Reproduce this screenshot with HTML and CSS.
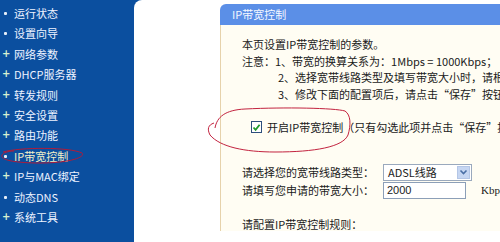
FILE: index.html
```html
<!DOCTYPE html>
<html lang="zh">
<head>
<meta charset="utf-8">
<link rel="stylesheet" href="styles.css">
</head>
<body>
<div class="page">
  <nav class="side">
    <ul class="menu">
      <li class="dot">运行状态</li>
      <li class="dot">设置向导</li>
      <li class="plus">网络参数</li>
      <li class="plus">DHCP服务器</li>
      <li class="plus">转发规则</li>
      <li class="plus">安全设置</li>
      <li class="plus">路由功能</li>
      <li class="dot active">IP带宽控制</li>
      <li class="plus">IP与MAC绑定</li>
      <li class="dot">动态DNS</li>
      <li class="plus">系统工具</li>
    </ul>
    <svg class="mark mark-side" width="86" height="20" viewBox="0 0 86 20"><path d="M3 6 C20 1, 70 1, 82 7 C86 11, 70 17, 40 17 C15 17, 0 14, 2 9 C3 7, 8 5, 14 5" fill="none" stroke="#b01c3a" stroke-width="1"/></svg>
  </nav>
  <main class="main">
    <section class="panel">
      <div class="panel-head">IP带宽控制</div>
      <div class="panel-body">
        <p class="line">本页设置IP带宽控制的参数。</p>
        <p class="line">注意：1、带宽的换算关系为：1Mbps = 1000Kbps；</p>
        <p class="line indent">2、选择宽带线路类型及填写带宽大小时，请根据实际情况进行选择和填写</p>
        <p class="line indent">3、修改下面的配置项后，请点击“保存”按钮，使配置项生效</p>
        <div class="check-row">
          <span class="checkbox"><svg width="9" height="9" viewBox="0 0 9 9"><path d="M1.5 4.5 L3.6 6.8 L7.6 1.8" fill="none" stroke="#1f9a2a" stroke-width="1.8"/></svg></span>
          <span>开启IP带宽控制（只有勾选此项并点击“保存”按钮后，设置才能生效）</span>
        </div>
        <div class="field-row first">
          <span class="label">请选择您的宽带线路类型：</span>
          <span class="select"><span class="select-text">ADSL线路</span><span class="select-btn"><svg width="9" height="7" viewBox="0 0 9 7"><path d="M1.5 1.5 L4.5 4.5 L7.5 1.5" fill="none" stroke="#4a6fa5" stroke-width="1.6"/></svg></span></span>
        </div>
        <div class="field-row">
          <span class="label">请填写您申请的带宽大小：</span>
          <span class="input">2000</span>
          <span class="unit">Kbps</span>
        </div>
        <p class="line rules">请配置IP带宽控制规则：</p>
      </div>
    </section>
    <svg class="mark mark-main" width="150" height="48" viewBox="0 0 150 48"><path d="M10 21 C12 10, 20 3, 40 2 C80 0, 130 1, 140 4 C146 8, 146 18, 143 28 C138 40, 110 45, 70 45 C40 45, 15 40, 5 28 C2 22, 3 18, 9 16" fill="none" stroke="#c2233f" stroke-width="1"/></svg>
  </main>
</div>
</body>
</html>
```
FILE: styles.css
```css
html, body {
  margin: 0;
  padding: 0;
}
body {
  width: 500px;
  height: 242px;
  overflow: hidden;
  background: #0b4f9f;
  font-family: "SimSun", "Noto Sans CJK SC", sans-serif;
}
.page {
  display: flex;
  height: 242px;
}
.side {
  position: relative;
  width: 134px;
  flex: none;
  background: #0b4f9f;
}
.menu {
  list-style: none;
  margin: 0;
  padding: 4px 0 0 0;
}
.menu li {
  position: relative;
  height: 20.4px;
  line-height: 18px;
  padding-left: 14px;
  font-size: 11px;
  color: #eef3ff;
  white-space: nowrap;
}
.menu li.dot::before {
  content: "";
  position: absolute;
  left: 4px;
  top: 8px;
  width: 3px;
  height: 3px;
  background: #e6eef8;
  border-radius: 1px;
}
.menu li.plus::before {
  content: "+";
  position: absolute;
  left: 2px;
  top: 0;
  font-family: "DejaVu Sans", sans-serif;
  font-weight: bold;
  font-size: 10px;
  color: #d8f0d0;
}
.menu li.active {
  color: #f2f0c8;
}
.mark {
  position: absolute;
  pointer-events: none;
}
.mark-side {
  left: 0;
  top: 146px;
}
.main {
  position: relative;
  flex: 1;
  background: #ffffff;
  border-top-left-radius: 8px;
  padding: 4px 0 0 86px;
  overflow: hidden;
}
.panel {
  width: 300px;
}
.panel-head {
  height: 21px;
  line-height: 20px;
  background: #5b8fe7;
  border-radius: 6px 0 0 0;
  color: #f4f8ff;
  font-size: 11px;
  padding-left: 12px;
}
.panel-body {
  background: #fffdf3;
  border-left: 1px solid #e6d2ab;
  padding: 11px 0 8px 21px;
  height: 206px;
  box-sizing: border-box;
  color: #1a1a1a;
  font-size: 11px;
  white-space: nowrap;
}
.line {
  margin: 0;
  height: 16.5px;
  line-height: 16px;
}
.indent {
  padding-left: 36px;
}
.check-row {
  display: flex;
  align-items: center;
  gap: 5px;
  margin-top: 17px;
  padding-left: 9px;
  height: 16px;
}
.checkbox {
  display: flex;
  align-items: center;
  justify-content: center;
  width: 10px;
  height: 10px;
  border: 1px solid #2d4f7c;
  background: #fff;
}
.field-row {
  display: flex;
  align-items: center;
  height: 18px;
}
.field-row.first {
  margin-top: 28px;
}
.label {
  width: 141px;
}
.select {
  display: flex;
  align-items: center;
  width: 89px;
  height: 17px;
  border: 1px solid #9aa9bd;
  background: #fff;
  box-sizing: border-box;
}
.select-text {
  flex: 1;
  padding-left: 4px;
}
.select-btn {
  display: flex;
  align-items: center;
  justify-content: center;
  width: 13px;
  height: 13px;
  margin-right: 1px;
  background: #c6d6f2;
  border: 1px solid #b4c6e6;
  box-sizing: border-box;
}
.input {
  width: 83px;
  height: 17px;
  line-height: 15px;
  border: 1px solid #8c9fb8;
  box-sizing: border-box;
  padding-left: 3px;
  background: #fff;
  font-family: "Liberation Sans", sans-serif;
}
.unit {
  margin-left: 15px;
  font-family: "Liberation Serif", serif;
}
.rules {
  margin-top: 17px;
}
.mark-main {
  left: 71px;
  top: 107px;
}
```
